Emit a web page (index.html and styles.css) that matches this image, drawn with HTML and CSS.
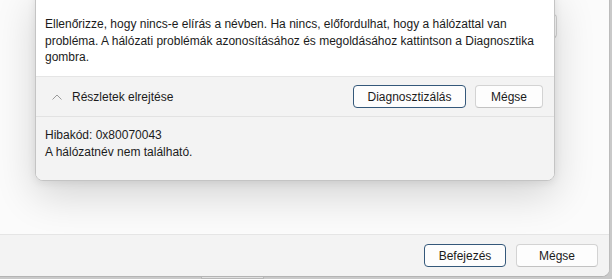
FILE: index.html
```html
<!doctype html>
<html lang="hu">
<head>
    <meta charset="UTF-8">
    <meta name="viewport" content="width=device-width, initial-scale=1.0">
    <title>Hálózati hiba</title>
    <link rel="stylesheet" href="styles.css">
</head>
<body>
    <div class="window">
        <div class="window-body">
            <div class="textbox"></div>

            <div class="dialog">
                <div class="dialog-message">
                    Ellenőrizze, hogy nincs-e elírás a névben. Ha nincs, előfordulhat, hogy a hálózattal van<br>
                    probléma. A hálózati problémák azonosításához és megoldásához kattintson a Diagnosztika<br>
                    gombra.
                </div>
                <div class="dialog-actions">
                    <button class="toggle-details">
                        <svg width="12" height="8" viewBox="0 0 12 8">
                            <path d="M1.5 6.5 L6 2 L10.5 6.5" fill="none" stroke="#9a9a9a" stroke-width="1"/>
                        </svg>
                        <span>Részletek elrejtése</span>
                    </button>
                    <div class="button-group">
                        <button class="btn btn-default btn-wide">Diagnosztizálás</button>
                        <button class="btn">Mégse</button>
                    </div>
                </div>
                <div class="dialog-details">
                    <div>Hibakód: 0x80070043</div>
                    <div>A hálózatnév nem található.</div>
                </div>
            </div>
        </div>
        <div class="window-footer">
            <button class="btn btn-default btn-footer">Befejezés</button>
            <button class="btn btn-footer">Mégse</button>
        </div>
    </div>
    <div class="taskbar-tab"></div>
</body>
</html>
```

FILE: styles.css
```css
:root {
    --text-color: #1b1b1b;
    --panel-color: #f3f3f3;
    --border-color: #e5e5e5;
    --button-border: #d3d3d3;
    --focus-border: #34587a;
}

* {
    box-sizing: border-box;
}

body {
    margin: 0;
    width: 612px;
    height: 279px;
    overflow: hidden;
    background-color: #c9c9c9;
    font-family: 'Liberation Sans', 'Open Sans', sans-serif;
    font-size: 12px;
    color: var(--text-color);
    position: relative;
}

.window {
    width: 610px;
    height: 277px;
    background-color: #fbfbfb;
    border-right: 1px solid #bcbcbc;
    border-bottom: 1px solid #b4b4b4;
    border-bottom-right-radius: 8px;
    display: flex;
    flex-direction: column;
    overflow: hidden;
    position: relative;
    z-index: 1;
}

.window-body {
    flex: 1;
    position: relative;
    padding-top: 14px;
}

.textbox {
    margin-left: 420px;
    width: 137px;
    height: 24px;
    border: 1px solid #d6d6d6;
    border-bottom-color: #9a9a9a;
    border-radius: 4px;
    background: #fdfdfd;
}

/* modal dialog lies over the window contents */
.dialog {
    position: absolute;
    left: 35px;
    top: -10px;
    width: 520px;
    background: #fff;
    border: 1px solid #c4c4c4;
    border-radius: 8px;
    box-shadow: 0 14px 40px rgba(0, 0, 0, 0.16), 0 2px 8px rgba(0, 0, 0, 0.08);
    overflow: hidden;
}

.dialog-message {
    padding: 25px 0 0 9px;
    line-height: 16.5px;
    height: 86px;
    white-space: nowrap;
    border-bottom: 1px solid var(--border-color);
}

.dialog-actions {
    display: flex;
    align-items: center;
    justify-content: space-between;
    height: 40px;
    padding: 0 11px 0 15px;
    background: var(--panel-color);
    border-bottom: 1px solid #e2e2e2;
}

.toggle-details {
    display: flex;
    align-items: center;
    gap: 9px;
    background: transparent;
    border: none;
    padding: 0;
    font: inherit;
    color: inherit;
}

.button-group {
    display: flex;
    gap: 9px;
}

.btn {
    height: 23px;
    min-width: 68px;
    padding: 0 10px;
    background: #fdfdfd;
    border: 1px solid var(--button-border);
    border-bottom-color: #c2c2c2;
    border-radius: 4px;
    font: inherit;
    color: var(--text-color);
}

.btn-default {
    border-color: var(--focus-border);
}

.btn-wide {
    width: 113px;
}

.dialog-details {
    background: var(--panel-color);
    padding: 10px 9px 0;
    height: 63px;
    line-height: 16.5px;
}

.window-footer {
    height: 42px;
    display: flex;
    align-items: center;
    justify-content: flex-end;
    gap: 10px;
    padding: 0 11px 0 0;
    background: var(--panel-color);
    border-top: 1px solid var(--border-color);
}

.btn-footer {
    width: 82px;
}

.taskbar-tab {
    position: absolute;
    left: 201px;
    top: 272px;
    width: 63px;
    height: 7px;
    background: #e0e0e0;
    border: 1px solid #b8b8b8;
}
```
